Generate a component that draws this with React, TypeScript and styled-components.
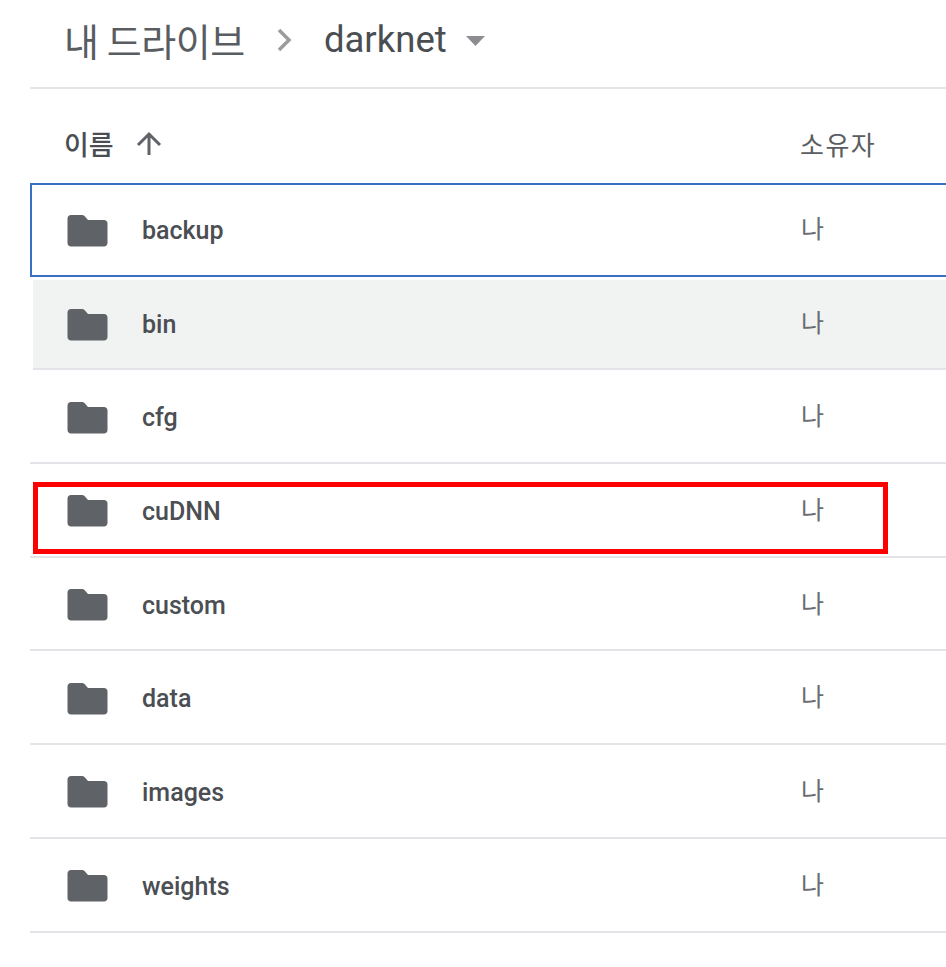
import React from "react";
import styled, { createGlobalStyle } from "styled-components";

const Global = createGlobalStyle`
  html, body { margin: 0; padding: 0; background: #fff; }
  body { font-family: Roboto, "Noto Sans CJK KR", sans-serif; }
  #root { width: 946px; height: 967px; overflow: hidden; }
`;

const Page = styled.div`
  position: relative;
  width: 946px;
  height: 967px;
  padding-left: 30px;
  box-sizing: border-box;
  background: #fff;
`;

const Breadcrumb = styled.div`
  display: flex;
  align-items: center;
  height: 89px;
  padding: 0 0 8px 34px;
  box-sizing: border-box;
  border-bottom: 2px solid #e3e4e7;
`;

const RootCrumb = styled.span`
  font-family: "Noto Sans CJK KR", sans-serif;
  font-weight: 400;
  font-size: 38px;
  line-height: 44px;
  color: #595c61;
  letter-spacing: -0.4px;
`;

const Current = styled.span`
  font-family: Roboto, sans-serif;
  font-size: 36.500px;
  line-height: 44px;
  color: #4a4e52;
  margin-left: 30px;
`;

const Chevron = styled.svg`
  width: 18px;
  height: 26px;
  margin-left: 31px;
`;

const Caret = styled.svg`
  width: 19px;
  height: 10px;
  margin: 3px 0 0 19px;
`;

const HeaderRow = styled.div`
  display: flex;
  align-items: center;
  height: 94px;
  padding: 16px 0 0 34px;
  box-sizing: border-box;
`;

const NameHeader = styled.span`
  font-family: "Noto Sans CJK KR", sans-serif;
  font-weight: 500;
  font-size: 27px;
  line-height: 32px;
  color: #4a4d52;
  width: 72px;
`;

const ArrowIcon = styled.svg`
  width: 26px;
  height: 26px;
  flex: none;
`;

const OwnerHeader = styled.span`
  font-family: "Noto Sans CJK KR", sans-serif;
  font-size: 26px;
  line-height: 32px;
  color: #5a5d61;
  margin-left: 638px;
  letter-spacing: 1.5px;
  white-space: nowrap;
`;

const List = styled.div`
  display: flex;
  flex-direction: column;
`;

const Row = styled.div<{ $focused?: boolean; $hover?: boolean }>`
  display: flex;
  align-items: center;
  height: 93.7px;
  box-sizing: border-box;
  padding-left: 37px;
  padding-top: 3px;
  background: ${(p) => (p.$hover ? "#f1f3f3" : "#fff")};
  border-bottom: 2px solid ${(p) => (p.$focused ? "#3a6fc4" : "#e3e4e7")};
  border-top: ${(p) => (p.$focused ? "2px solid #3a6fc4" : "0")};
  border-left: ${(p) => (p.$focused ? "2px solid #3a6fc4" : "0")};
  ${(p) => (p.$focused ? "padding-left: 35px; padding-top: 2px;" : "")}
  ${(p) => (p.$hover ? "margin-left: 3px; padding-left: 34px; border-top: 3px solid #fff; padding-top: 1px;" : "")}
`;

const FolderIcon = styled.svg`
  width: 41px;
  height: 34px;
  flex: none;
`;

const FileName = styled.span`
  font-family: Roboto, sans-serif;
  font-weight: 500;
  font-size: 25px;
  color: #4b4e53;
  margin-left: 34px;
  width: 659px;
  flex: none;
`;

const Owner = styled.span`
  font-family: "Noto Sans CJK KR", sans-serif;
  font-size: 25px;
  color: #6a6d71;
  margin-top: -7px;
`;

const Highlight = styled.div`
  position: absolute;
  left: 33px;
  top: 482px;
  width: 855px;
  height: 72px;
  box-sizing: border-box;
  border: 5px solid #fe0000;
  pointer-events: none;
`;

const Folder = () => (
  <FolderIcon viewBox="0 0 41 34">
    <path
      d="M4 1h11c1 0 1.800.4 2.500 1.100L21 6h16c2 0 3.500 1.500 3.500 3.500V29c0 2-1.500 3.500-3.500 3.500H4C2 32.500.5 31 .5 29V4.500C.5 2.500 2 1 4 1z"
      fill="#5f6368"
    />
  </FolderIcon>
);

const files = ["backup", "bin", "cfg", "cuDNN", "custom", "data", "images", "weights"];

export default function App() {
  return (
    <Page>
      <Global />
      <Breadcrumb>
        <RootCrumb>내 드라이브</RootCrumb>
        <Chevron viewBox="0 0 18 26">
          <path d="M3 3l10 10L3 23" fill="none" stroke="#9b9c9e" strokeWidth="3.500" />
        </Chevron>
        <Current>darknet</Current>
        <Caret viewBox="0 0 19 10">
          <path d="M0 0h19L9.500 10z" fill="#8b8d90" />
        </Caret>
      </Breadcrumb>
      <HeaderRow>
        <NameHeader>이름</NameHeader>
        <ArrowIcon viewBox="0 0 26 26">
          <path d="M13 24V3M2 14L13 3l11 11" fill="none" stroke="#5f6368" strokeWidth="3" />
        </ArrowIcon>
        <OwnerHeader>소유자</OwnerHeader>
      </HeaderRow>
      <List>
        {files.map((f, i) => (
          <Row key={f} $focused={i === 0} $hover={i === 1}>
            <Folder />
            <FileName>{f}</FileName>
            <Owner>나</Owner>
          </Row>
        ))}
      </List>
      <Highlight />
    </Page>
  );
}
